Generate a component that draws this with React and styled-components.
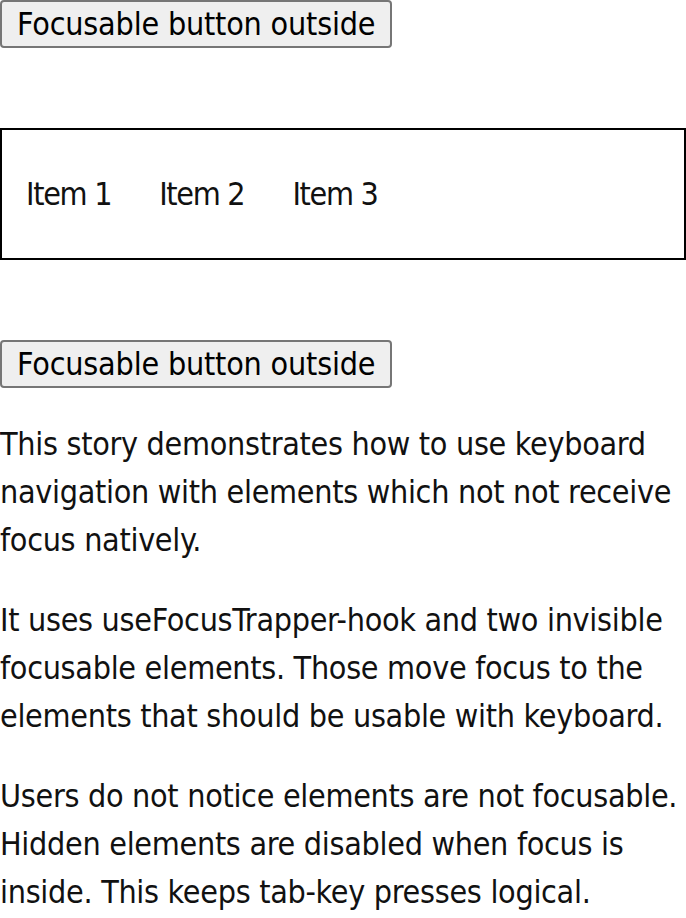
import styled, { createGlobalStyle } from 'styled-components';

const GlobalStyle = createGlobalStyle`
    body {
        margin: 0;
        background: #fff;
        color: #111;
        font-family: 'DejaVu Sans Condensed', 'Liberation Sans Narrow', sans-serif;
        font-size: 32px;
        line-height: 48px;
        letter-spacing: -0.3px;
    }
`

const Page = styled.div`
    display: flex;
    flex-direction: column;
    align-items: flex-start;
`

const OutsideButton = styled.button`
    height: 48px;
    padding: 0 15px;
    border: 2px solid #767676;
    border-radius: 4px;
    background: #efefef;
    color: #000;
    font-family: inherit;
    font-size: 32px;
    letter-spacing: -0.2px;
    line-height: 44px;
    margin-bottom: ${({ gap }) => gap || 0}px;
`

const Trap = styled.ul`
    box-sizing: border-box;
    align-self: stretch;
    display: flex;
    align-items: center;
    height: 132px;
    margin: 0 0 80px;
    padding: 0;
    list-style: none;
    border: 2px solid #000;
`

const Item = styled.li`
    padding: 0 24px;
    line-height: 48px;
    letter-spacing: -1.3px;
`

const Text = styled.p`
    margin: 0 0 32px;
    &:first-of-type {
        margin-top: 32px;
    }
`

export default function App() {
    return (
        <>
            <GlobalStyle />
            <Page>
                <OutsideButton gap={80}>Focusable button outside</OutsideButton>
                <Trap>
                    <Item>Item 1</Item>
                    <Item>Item 2</Item>
                    <Item>Item 3</Item>
                </Trap>
                <OutsideButton>Focusable button outside</OutsideButton>
                <Text>
                    This story demonstrates how to use keyboard navigation with elements which not not receive focus natively.
                </Text>
                <Text>
                    It uses useFocusTrapper-hook and two invisible focusable elements. Those move focus to the elements that should be usable with keyboard.
                </Text>
                <Text>
                    Users do not notice elements are not focusable. Hidden elements are disabled when focus is inside. This keeps tab-key presses logical.
                </Text>
            </Page>
        </>
    )
}
